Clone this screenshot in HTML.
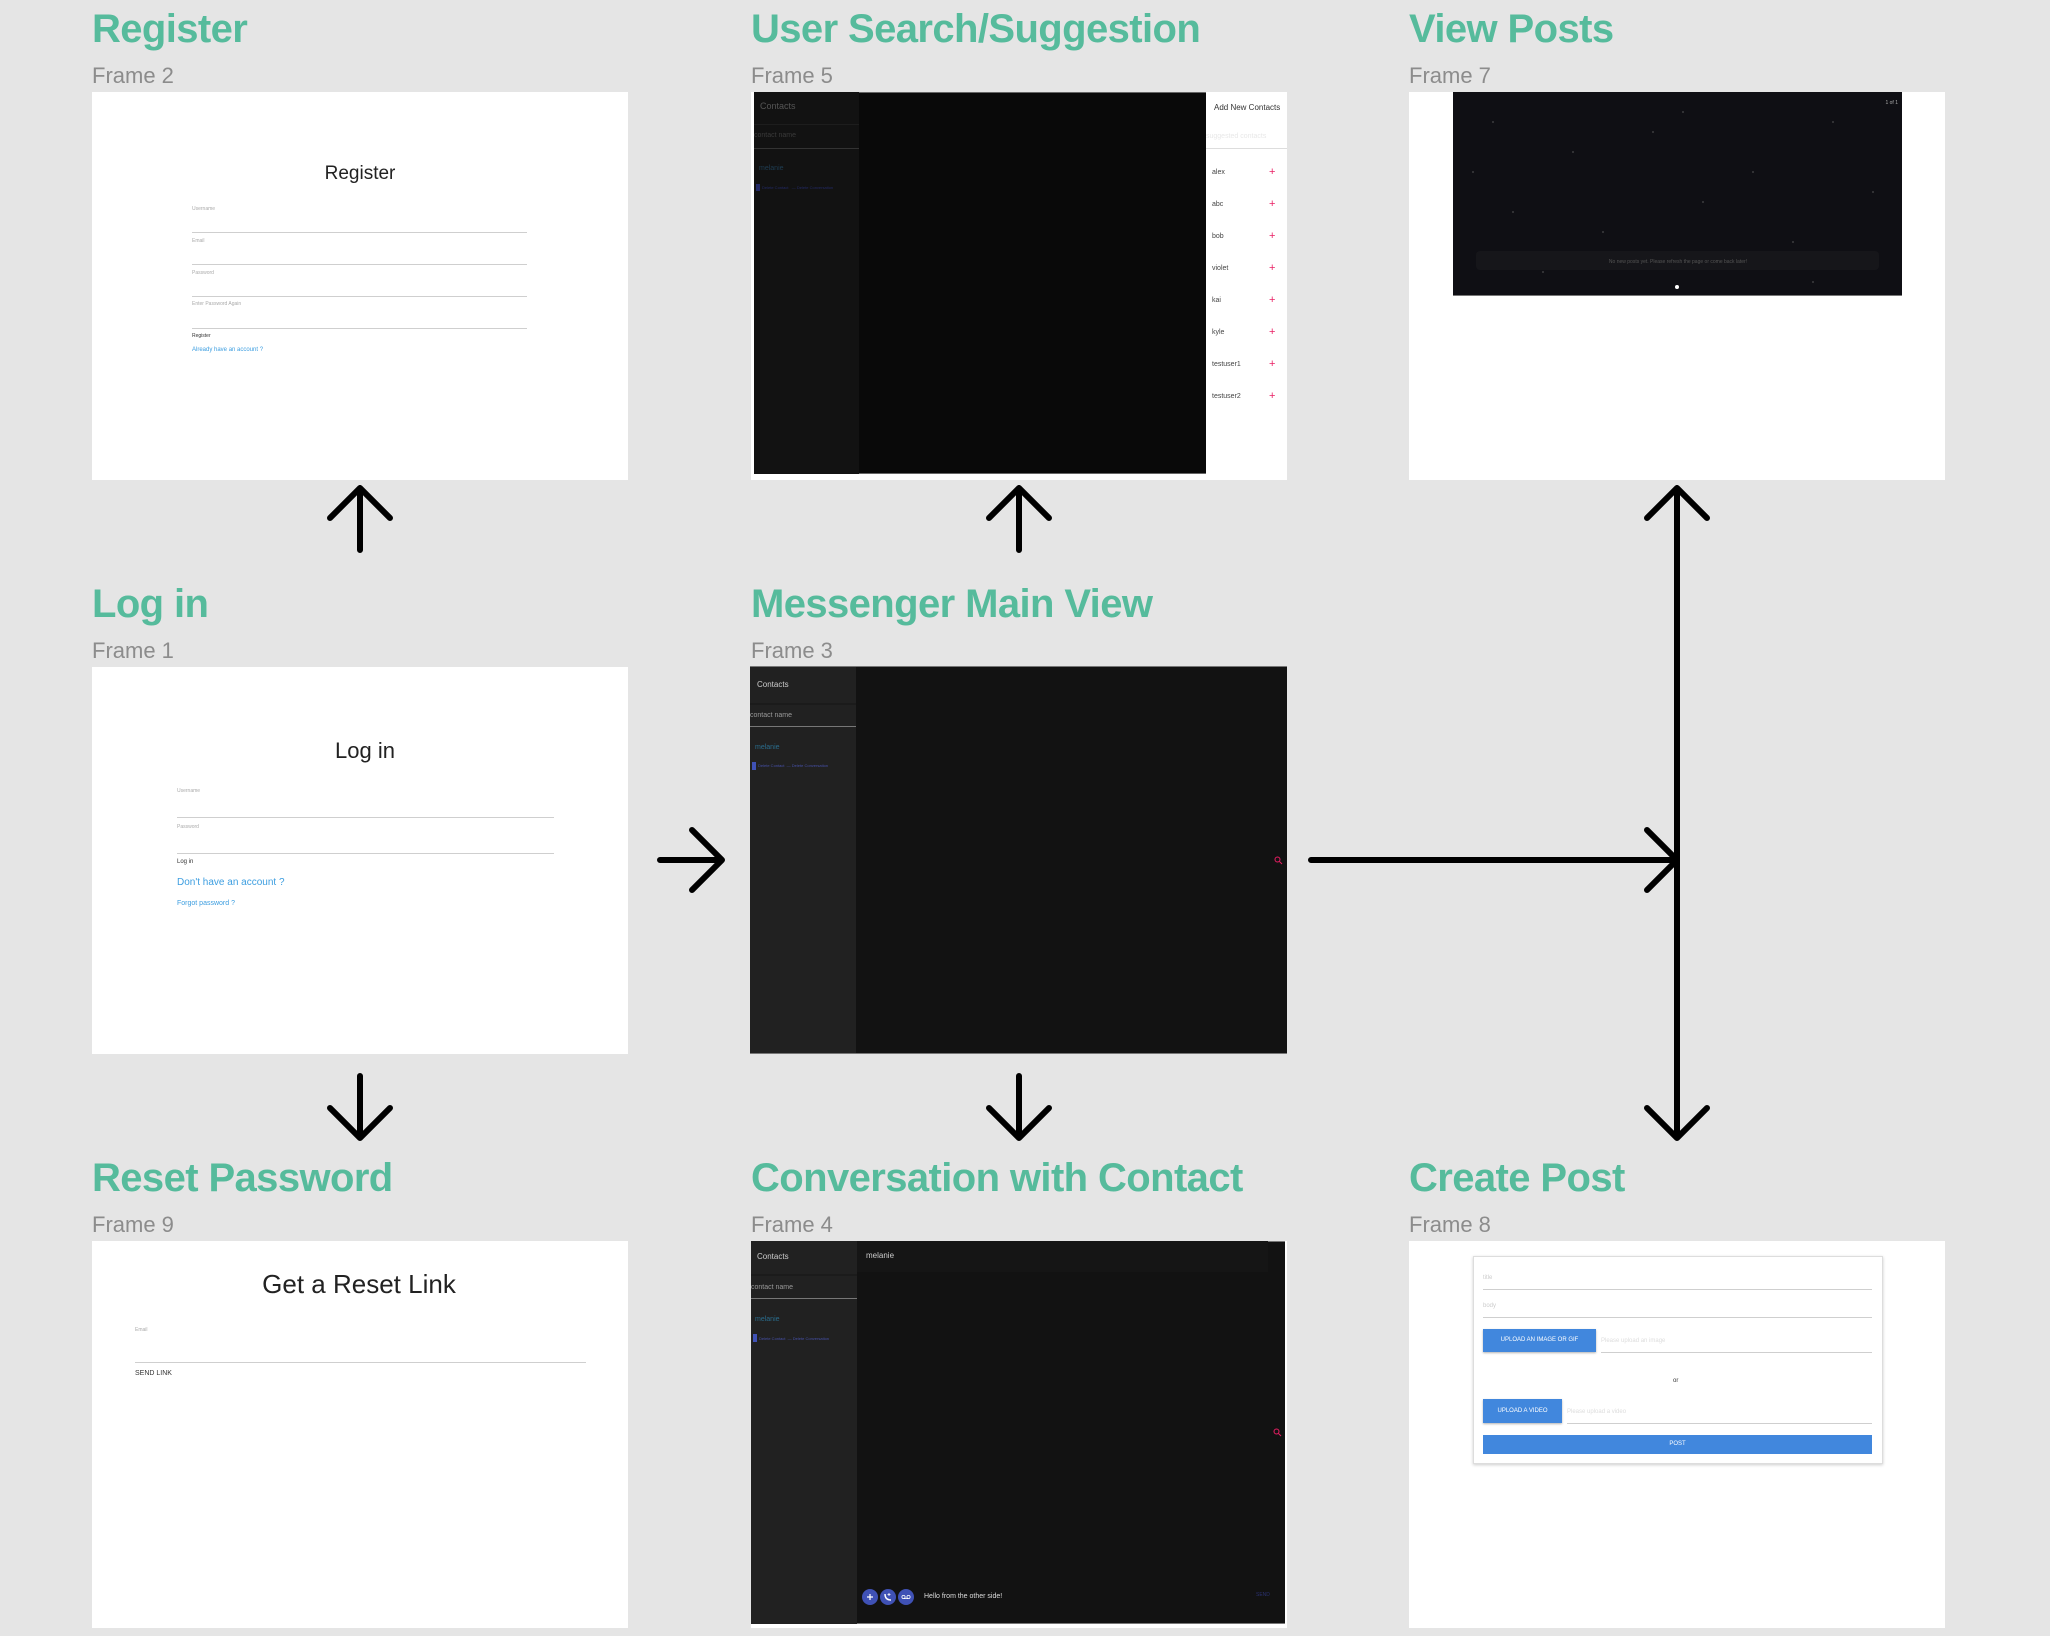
<!DOCTYPE html>
<html><head><meta charset="utf-8">
<style>
*{margin:0;padding:0;box-sizing:border-box}
html,body{width:2050px;height:1636px;overflow:hidden}
body{background:#e5e5e5;position:relative;font-family:"Liberation Sans",sans-serif}
.a{position:absolute;white-space:nowrap;line-height:1}
.t{font-size:40px;font-weight:bold;color:#56bb9c;letter-spacing:-0.6px}
.f{font-size:22px;color:#8c8c8c}
.box{position:absolute;background:#fff;overflow:hidden}
.ln{position:absolute;height:1px;background:#cfcfcf}
.lbl{font-size:5px;color:#aaa}
.blue{color:#3d9ee0}
.sb{position:absolute;left:0;top:0;bottom:0;width:106px;background:#212121}
.dt{color:#4650a8;font-size:4px}
</style></head><body>

<div class="a t" style="left:92px;top:9px">Register</div>
<div class="a f" style="left:92px;top:65px">Frame 2</div>
<div class="a t" style="left:751px;top:9px">User Search/Suggestion</div>
<div class="a f" style="left:751px;top:65px">Frame 5</div>
<div class="a t" style="left:1409px;top:9px">View Posts</div>
<div class="a f" style="left:1409px;top:65px">Frame 7</div>

<div class="a t" style="left:92px;top:584px">Log in</div>
<div class="a f" style="left:92px;top:640px">Frame 1</div>
<div class="a t" style="left:751px;top:584px">Messenger Main View</div>
<div class="a f" style="left:751px;top:640px">Frame 3</div>

<div class="a t" style="left:92px;top:1158px">Reset Password</div>
<div class="a f" style="left:92px;top:1214px">Frame 9</div>
<div class="a t" style="left:751px;top:1158px">Conversation with Contact</div>
<div class="a f" style="left:751px;top:1214px">Frame 4</div>
<div class="a t" style="left:1409px;top:1158px">Create Post</div>
<div class="a f" style="left:1409px;top:1214px">Frame 8</div>

<div class="box" style="left:92px;top:92px;width:536px;height:388px">
  <div class="a" style="left:0;width:536px;text-align:center;top:72px;font-size:19px;color:#222">Register</div>
  <div class="a lbl" style="left:100px;top:115px">Username</div>
  <div class="ln" style="left:100px;top:140px;width:335px"></div>
  <div class="a lbl" style="left:100px;top:147px">Email</div>
  <div class="ln" style="left:100px;top:172px;width:335px"></div>
  <div class="a lbl" style="left:100px;top:179px">Password</div>
  <div class="ln" style="left:100px;top:204px;width:335px"></div>
  <div class="a lbl" style="left:100px;top:210px">Enter Password Again</div>
  <div class="ln" style="left:100px;top:236px;width:335px"></div>
  <div class="a" style="left:100px;top:242px;font-size:5px;color:#333">Register</div>
  <div class="a blue" style="left:100px;top:255px;font-size:6px">Already have an account ?</div>
</div>

<div class="box" style="left:751px;top:92px;width:536px;height:388px">
  <div style="position:absolute;left:3px;top:0;width:452px;height:382px;background:#090909;border-top:1px solid #666;border-bottom:1px solid #666"></div>
  <div style="position:absolute;left:3px;top:0;width:105px;height:382px;background:#121212"></div>
  <div style="position:absolute;left:3px;top:32px;width:105px;height:1px;background:#1d1d1d"></div>
  <div style="position:absolute;left:3px;top:56px;width:105px;height:1px;background:#333"></div>
  <div class="a" style="left:9px;top:10px;font-size:9px;color:#555">Contacts</div>
  <div class="a" style="left:3px;top:40px;font-size:7px;color:#3a3a3a">contact name</div>
  <div class="a" style="left:8px;top:73px;font-size:7px;color:#1f3d52">melanie</div>
  <div style="position:absolute;left:5px;top:92px;width:4px;height:7px;background:#232a66"></div>
  <div class="a" style="left:11px;top:94px;font-size:4px;color:#232a66">Delete Contact &nbsp;&nbsp;— Delete Conversation</div>
  <div class="a" style="left:463px;top:12px;font-size:8px;color:#333">Add New Contacts</div>
  <div class="a" style="left:455px;top:41px;font-size:7px;color:#e8e8e8">suggested contacts</div>
  <div style="position:absolute;left:455px;top:56px;width:81px;height:1px;background:#ddd"></div>
  <div class="a" style="left:461px;top:65px;font-size:7px;color:#444;line-height:32px">alex<br>abc<br>bob<br>violet<br>kai<br>kyle<br>testuser1<br>testuser2</div>
  <div class="a" style="left:518px;top:64px;font-size:11px;color:#e91e63;line-height:32px">+<br>+<br>+<br>+<br>+<br>+<br>+<br>+</div>
</div>

<div class="box" style="left:1409px;top:92px;width:536px;height:388px">
  <svg style="position:absolute;left:44px;top:0" width="449" height="204">
    <rect width="449" height="204" fill="#0f0f14"/>
    <g fill="#888">
      <circle cx="40" cy="30" r=".6"/><circle cx="120" cy="60" r=".6"/><circle cx="200" cy="40" r=".6"/><circle cx="300" cy="80" r=".6"/><circle cx="380" cy="30" r=".6"/><circle cx="60" cy="120" r=".6"/><circle cx="150" cy="140" r=".6"/><circle cx="250" cy="110" r=".6"/><circle cx="340" cy="150" r=".6"/><circle cx="420" cy="100" r=".6"/><circle cx="90" cy="180" r=".6"/><circle cx="270" cy="175" r=".6"/><circle cx="20" cy="80" r=".6"/><circle cx="230" cy="20" r=".6"/><circle cx="360" cy="190" r=".6"/>
    </g>
    <rect x="23" y="159" width="403" height="19" rx="4" fill="#16161a"/>
    <text x="225" y="171" font-size="5" fill="#555" text-anchor="middle" font-family="Liberation Sans">No new posts yet. Please refresh the page or come back later!</text>
    <text x="445" y="12" font-size="5" fill="#aaa" text-anchor="end" font-family="Liberation Sans">1 of 1</text>
    <circle cx="224" cy="195" r="2" fill="#fff"/>
    <rect y="203" width="449" height="1" fill="#777"/>
  </svg>
</div>

<div class="box" style="left:92px;top:667px;width:536px;height:387px">
  <div class="a" style="left:0;width:546px;text-align:center;top:73px;font-size:22px;color:#222">Log in</div>
  <div class="a lbl" style="left:85px;top:122px">Username</div>
  <div class="ln" style="left:85px;top:150px;width:377px"></div>
  <div class="a lbl" style="left:85px;top:158px">Password</div>
  <div class="ln" style="left:85px;top:186px;width:377px"></div>
  <div class="a" style="left:85px;top:192px;font-size:6px;color:#333">Log in</div>
  <div class="a blue" style="left:85px;top:211px;font-size:10px">Don't have an account ?</div>
  <div class="a blue" style="left:85px;top:233px;font-size:7px">Forgot password ?</div>
</div>

<div class="box" style="left:750px;top:666px;width:537px;height:388px;background:#121212;border-top:1px solid #777;border-bottom:1px solid #777">
  <div class="sb"></div>
  <div style="position:absolute;left:0;top:36px;width:106px;height:2px;background:#1b1b1b"></div>
  <div style="position:absolute;left:0;top:59px;width:106px;height:1px;background:#777"></div>
  <div class="a" style="left:7px;top:14px;font-size:8px;color:#ccc">Contacts</div>
  <div class="a" style="left:0;top:45px;font-size:7px;color:#999">contact name</div>
  <div class="a" style="left:5px;top:77px;font-size:7px;color:#2a6c8c">melanie</div>
  <div style="position:absolute;left:2px;top:95px;width:4px;height:8px;background:#3f51b5"></div>
  <div class="a dt" style="left:8px;top:97px">Delete Contact &nbsp;— Delete Conversation</div>
  <svg style="position:absolute;left:524px;top:189px" width="9" height="9"><circle cx="3.5" cy="3.5" r="2.5" fill="none" stroke="#e91e63" stroke-width="1"/><line x1="5.5" y1="5.5" x2="8" y2="8" stroke="#e91e63" stroke-width="1"/></svg>
</div>

<div class="box" style="left:92px;top:1241px;width:536px;height:387px">
  <div class="a" style="left:0;width:534px;text-align:center;top:30px;font-size:26px;color:#222">Get a Reset Link</div>
  <div class="a lbl" style="left:43px;top:87px">Email</div>
  <div class="ln" style="left:43px;top:121px;width:451px"></div>
  <div class="a" style="left:43px;top:129px;font-size:7px;color:#333">SEND LINK</div>
</div>

<div class="box" style="left:751px;top:1241px;width:536px;height:387px;background:#fff">
  <div style="position:absolute;left:0;top:0;width:534px;height:383px;background:#121212;border-top:1px solid #777;border-bottom:1px solid #777"></div>
  <div class="sb" style="bottom:4px"></div>
  <div style="position:absolute;left:106px;top:0;width:411px;height:31px;background:#151515"></div>
  <div style="position:absolute;left:0;top:33px;width:106px;height:2px;background:#1b1b1b"></div>
  <div style="position:absolute;left:0;top:57px;width:106px;height:1px;background:#777"></div>
  <div class="a" style="left:6px;top:12px;font-size:8px;color:#ccc">Contacts</div>
  <div class="a" style="left:115px;top:11px;font-size:8px;color:#ccc">melanie</div>
  <div class="a" style="left:0;top:43px;font-size:7px;color:#999">contact name</div>
  <div class="a" style="left:4px;top:75px;font-size:7px;color:#2a6c8c">melanie</div>
  <div style="position:absolute;left:2px;top:93px;width:4px;height:8px;background:#3f51b5"></div>
  <div class="a dt" style="left:8px;top:96px">Delete Contact &nbsp;— Delete Conversation</div>
  <svg style="position:absolute;left:522px;top:187px" width="9" height="9"><circle cx="3.5" cy="3.5" r="2.5" fill="none" stroke="#e91e63" stroke-width="1"/><line x1="5.5" y1="5.5" x2="8" y2="8" stroke="#e91e63" stroke-width="1"/></svg>
  <svg style="position:absolute;left:110px;top:347px" width="60" height="18">
    <circle cx="9" cy="9" r="8" fill="#3f51b5"/><path d="M6 9h6M9 6v6" stroke="#fff" stroke-width="1.2"/>
    <circle cx="27" cy="9" r="8" fill="#3f51b5"/><path d="M24 6c0 4 2 6 6 6" stroke="#fff" stroke-width="1.4" fill="none"/><path d="M28 5v3M26.5 6.5h3" stroke="#fff" stroke-width=".8"/>
    <circle cx="45" cy="9" r="8" fill="#3f51b5"/><circle cx="42.5" cy="9" r="1.6" fill="none" stroke="#fff" stroke-width=".8"/><circle cx="47.5" cy="9" r="1.6" fill="none" stroke="#fff" stroke-width=".8"/><path d="M42.5 10.6h5" stroke="#fff" stroke-width=".8"/>
  </svg>
  <div class="a" style="left:173px;top:352px;font-size:7px;color:#ddd">Hello from the other side!</div>
  <div class="a" style="left:505px;top:352px;font-size:5px;color:#2a3170">SEND</div>
</div>

<div class="box" style="left:1409px;top:1241px;width:536px;height:387px">
  <div style="position:absolute;left:64px;top:15px;width:410px;height:208px;border:1px solid #ddd;box-shadow:0 1px 3px rgba(0,0,0,.2)">
    <div class="a" style="left:9px;top:18px;font-size:6px;color:#ccc">title</div>
    <div class="ln" style="left:9px;top:32px;width:389px"></div>
    <div class="a" style="left:9px;top:46px;font-size:6px;color:#ccc">body</div>
    <div class="ln" style="left:9px;top:60px;width:389px"></div>
    <div class="a" style="left:9px;top:72px;width:113px;height:23px;background:#4187dd;color:#fff;font-size:6px;line-height:23px;text-align:center;box-shadow:0 1px 2px rgba(0,0,0,.3)">UPLOAD AN IMAGE OR GIF</div>
    <div class="a" style="left:127px;top:81px;font-size:6px;color:#ddd">Please upload an image</div>
    <div class="ln" style="left:127px;top:95px;width:271px"></div>
    <div class="a" style="left:199px;top:121px;font-size:6px;color:#333">or</div>
    <div class="a" style="left:9px;top:142px;width:79px;height:24px;background:#4187dd;color:#fff;font-size:6px;line-height:24px;text-align:center;box-shadow:0 1px 2px rgba(0,0,0,.3)">UPLOAD A VIDEO</div>
    <div class="a" style="left:93px;top:152px;font-size:6px;color:#ddd">Please upload a video</div>
    <div class="ln" style="left:93px;top:166px;width:305px"></div>
    <div class="a" style="left:9px;top:178px;width:389px;height:19px;background:#4187dd;color:#fff;font-size:6px;line-height:19px;text-align:center">POST</div>
  </div>
</div>

<svg style="position:absolute;left:0;top:0" width="2050" height="1636">
  <g stroke="#000" stroke-width="6" fill="none" stroke-linecap="round" stroke-linejoin="round">
    <path d="M360 550V488M330 518L360 488L390 518"/>
    <path d="M360 1076V1138M330 1108L360 1138L390 1108"/>
    <path d="M1019 550V488M989 518L1019 488L1049 518"/>
    <path d="M1019 1076V1138M989 1108L1019 1138L1049 1108"/>
    <path d="M660 860H722M692 830L722 860L692 890" />
    <path d="M1311 860H1675M1647 830L1677 860L1647 890"/>
    <path d="M1677 488V1138M1647 518L1677 488L1707 518M1647 1108L1677 1138L1707 1108"/>
  </g>
</svg>
</body></html>
